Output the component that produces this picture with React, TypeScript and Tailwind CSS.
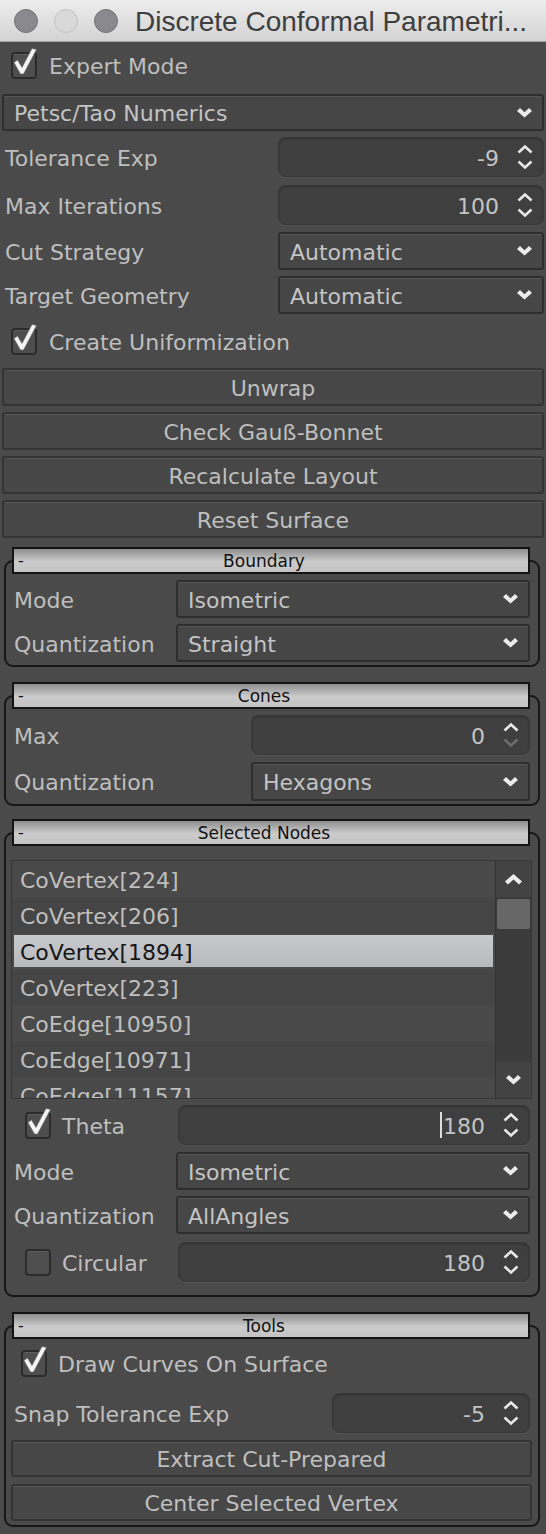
import React from 'react'

const label = 'text-[22px] leading-none pt-[3px] text-[#bfbfbf] whitespace-nowrap'

function Check({ checked }: { checked: boolean }) {
  return (
    <span className="relative inline-block w-[26px] h-[27px] shrink-0">
      <span className="absolute inset-0 rounded-[4px] border-2 border-[#2b2b2b] bg-[#4e4e4e] shadow-[inset_0_1px_0_#5d5d5d]" />
      {checked && (
        <svg className="absolute left-0 top-[-4px]" width="26" height="31" viewBox="0 0 26 31">
          <polygon
            points="3,14.5 6.5,12 11,19.5 21,0.5 25.5,1.5 12.5,26 9.5,26"
            fill="#f4f4f4"
            stroke="#6a6a6a"
            strokeWidth="0.6"
          />
        </svg>
      )}
    </span>
  )
}

function SpinArrows({ downDisabled = false }: { downDisabled?: boolean }) {
  return (
    <svg width="18" height="26" viewBox="0 0 18 26">
      <path d="M2.5 8.5 L9 2.5 L15.5 8.5" fill="none" stroke="#e8e8e8" strokeWidth="2.6" />
      <path
        d="M2.5 17.5 L9 23.5 L15.5 17.5"
        fill="none"
        stroke={downDisabled ? '#6c6c6c' : '#e8e8e8'}
        strokeWidth="2.6"
      />
    </svg>
  )
}

function Chevron() {
  return (
    <svg width="15" height="10" viewBox="0 0 15 10">
      <polygon points="0,3 3,0 7.5,4.2 12,0 15,3 7.5,9.5" fill="#ececec" />
    </svg>
  )
}

function SpinBox({
  value,
  className = '',
  caret = false,
  downDisabled = false,
}: {
  value: string
  className?: string
  caret?: boolean
  downDisabled?: boolean
}) {
  return (
    <div
      className={`flex items-center h-[40px] rounded-[7px] bg-[#3f3f3f] border border-[#383838] shadow-[inset_0_1px_2px_rgba(0,0,0,0.25),0_1px_0_#545454] ${className}`}
    >
      <div className="flex-1 flex justify-end items-center pr-[8px] pt-[3px] text-[22px] leading-none text-[#c4c4c4]">
        {caret && <span className="w-[2px] h-[26px] -mt-[3px] bg-[#dedede] mr-[1px]" />}
        {value}
      </div>
      <div className="w-[36px] flex justify-center">
        <SpinArrows downDisabled={downDisabled} />
      </div>
    </div>
  )
}

function Combo({ value, className = '' }: { value: string; className?: string }) {
  return (
    <div
      className={`flex items-center justify-between rounded-[3px] bg-[#464646] border-2 border-[#2e2e2e] shadow-[inset_0_1px_0_#565656] pl-[10px] pr-[10px] ${className}`}
    >
      <span className="pt-[3px] text-[22px] leading-none text-[#c4c4c4] whitespace-nowrap">{value}</span>
      <Chevron />
    </div>
  )
}

function Button({ title, className = '' }: { title: string; className?: string }) {
  return (
    <div
      className={`flex items-center justify-center rounded-[3px] bg-[#474747] border-2 border-[#343434] shadow-[inset_0_1px_0_#575757] ${className}`}
    >
      <span className="pt-[3px] text-[22px] leading-none text-[#bfbfbf] whitespace-nowrap">{title}</span>
    </div>
  )
}

function Group({
  title,
  className = '',
  frame = '',
  children,
}: {
  title: string
  className?: string
  frame?: string
  children: React.ReactNode
}) {
  return (
    <div className={`ml-[2px] mr-[4px] ${className}`}>
      <div className="relative z-10 ml-[8px] mr-[10px] h-[27px] border-2 border-[#141414] bg-[linear-gradient(to_bottom,#8e8e8e,#cbcbcb_55%,#c3c3c3)] flex items-center">
        <span className="w-[14px] pl-[4px] text-[16px] leading-none text-[#111]">-</span>
        <span className="flex-1 text-center pr-[28px] pt-[1px] text-[17px] leading-none text-[#111]">{title}</span>
      </div>
      <div className={`-mt-[14px] border-2 border-[#161616] rounded-[9px] px-[8px] ${frame}`}>{children}</div>
    </div>
  )
}

function NodeList() {
  const items = [
    'CoVertex[224]',
    'CoVertex[206]',
    'CoVertex[1894]',
    'CoVertex[223]',
    'CoEdge[10950]',
    'CoEdge[10971]',
    'CoEdge[11157]',
  ]
  return (
    <div className="-ml-[3px] -mr-[2px] h-[239px] flex border border-[#363636] bg-[#474747]">
      <div className="flex-1 overflow-hidden">
        {items.map((it, i) => (
          <div
            key={it}
            className={`h-[36px] flex items-center ${i % 2 === 0 ? 'bg-[#494949]' : 'bg-[#454545]'}`}
          >
            {i === 2 ? (
              <div className="mx-[2px] h-[32px] flex-1 flex items-center pl-[6px] pt-[3px] bg-[linear-gradient(to_bottom,#c8c9cc,#b8b9bc)] text-[22px] leading-none text-[#141414]">
                {it}
              </div>
            ) : (
              <span className="pl-[8px] pt-[3px] text-[22px] leading-none text-[#bfbfbf] whitespace-nowrap">{it}</span>
            )}
          </div>
        ))}
      </div>
      <div className="w-[36px] bg-[#3b3b3b] flex flex-col border-l border-[#333]">
        <div className="h-[36px] flex items-center justify-center bg-[#434343]">
          <svg width="17" height="11" viewBox="0 0 17 11">
            <polygon points="0,7.5 8.5,0 17,7.5 14,10.5 8.5,5.5 3,10.5" fill="#ececec" />
          </svg>
        </div>
        <div className="mt-[2px] mx-[1px] h-[30px] bg-[#676767] rounded-[2px]" />
        <div className="flex-1" />
        <div className="h-[36px] flex items-center justify-center bg-[#434343]">
          <Chevron />
        </div>
      </div>
    </div>
  )
}

export default function App() {
  return (
    <div className="w-[546px] min-h-[1534px] bg-[#4a4a4a] font-['DejaVu_Sans',sans-serif] overflow-hidden">
      {/* title bar */}
      <div className="h-[42px] flex items-center pl-[14px] bg-[linear-gradient(to_bottom,#ededed,#d3d3d3)] border-b border-[#a3a3a3]">
        <span className="w-[24px] h-[24px] rounded-full bg-[#8a8a8e] border border-[#737376]" />
        <span className="ml-[16px] w-[24px] h-[24px] rounded-full bg-[#d9d9d9] border border-[#c3c3c3]" />
        <span className="ml-[16px] w-[24px] h-[24px] rounded-full bg-[#8a8a8e] border border-[#737376]" />
        <span className="ml-[17px] pt-[2px] font-['Liberation_Sans',Arial,sans-serif] text-[28px] leading-none text-[#3e3e3e] whitespace-nowrap">
          Discrete Conformal Parametri...
        </span>
      </div>

      <div className="px-[2px]">
        <div className="h-[47px] flex items-center pl-[9px] gap-[12px]">
          <Check checked />
          <span className={label}>Expert Mode</span>
        </div>
        <Combo value="Petsc/Tao Numerics" className="mt-[5px] h-[37px]" />

        <div className="mt-[6px] flex items-center justify-between">
          <span className={`${label} pl-[3px]`}>Tolerance Exp</span>
          <SpinBox value="-9" className="w-[266px]" />
        </div>
        <div className="mt-[8px] flex items-center justify-between">
          <span className={`${label} pl-[3px]`}>Max Iterations</span>
          <SpinBox value="100" className="w-[266px]" />
        </div>
        <div className="mt-[7px] flex items-center justify-between">
          <span className={`${label} pl-[3px]`}>Cut Strategy</span>
          <Combo value="Automatic" className="w-[266px] h-[38px]" />
        </div>
        <div className="mt-[6px] flex items-center justify-between">
          <span className={`${label} pl-[3px]`}>Target Geometry</span>
          <Combo value="Automatic" className="w-[266px] h-[38px]" />
        </div>
        <div className="mt-[3px] h-[48px] flex items-center pl-[9px] gap-[12px]">
          <Check checked />
          <span className={label}>Create Uniformization</span>
        </div>

        <Button title="Unwrap" className="mt-[3px] h-[38px]" />
        <Button title="Check Gauß-Bonnet" className="mt-[6px] h-[38px]" />
        <Button title="Recalculate Layout" className="mt-[6px] h-[38px]" />
        <Button title="Reset Surface" className="mt-[6px] h-[38px]" />

        <Group title="Boundary" className="mt-[9px]" frame="pt-[18px] pb-[3px]">
          <div className="flex items-center justify-between">
            <span className={label}>Mode</span>
            <Combo value="Isometric" className="w-[354px] h-[38px]" />
          </div>
          <div className="mt-[6px] flex items-center justify-between">
            <span className={label}>Quantization</span>
            <Combo value="Straight" className="w-[354px] h-[38px]" />
          </div>
        </Group>

        <Group title="Cones" className="mt-[15px]" frame="pt-[18px] pb-[3px]">
          <div className="flex items-center justify-between">
            <span className={label}>Max</span>
            <SpinBox value="0" downDisabled className="w-[279px]" />
          </div>
          <div className="mt-[7px] flex items-center justify-between">
            <span className={label}>Quantization</span>
            <Combo value="Hexagons" className="w-[279px] h-[39px]" />
          </div>
        </Group>

        <Group title="Selected Nodes" className="mt-[13px]" frame="pt-[26px] pb-[13px]">
          <NodeList />
          <div className="mt-[6px] flex items-center justify-between">
            <div className="flex items-center pl-[11px] gap-[11px]">
              <Check checked />
              <span className={label}>Theta</span>
            </div>
            <SpinBox value="180" caret className="w-[352px]" />
          </div>
          <div className="mt-[7px] flex items-center justify-between">
            <span className={label}>Mode</span>
            <Combo value="Isometric" className="w-[354px] h-[38px]" />
          </div>
          <div className="mt-[6px] flex items-center justify-between">
            <span className={label}>Quantization</span>
            <Combo value="AllAngles" className="w-[354px] h-[38px]" />
          </div>
          <div className="mt-[8px] flex items-center justify-between">
            <div className="flex items-center pl-[11px] gap-[11px]">
              <Check checked={false} />
              <span className={label}>Circular</span>
            </div>
            <SpinBox value="180" className="w-[352px]" />
          </div>
        </Group>

        <Group title="Tools" className="mt-[15px]" frame="pt-[14px] pb-[4px]">
          <div className="h-[44px] flex items-center pl-[7px] gap-[11px]">
            <Check checked />
            <span className={label}>Draw Curves On Surface</span>
          </div>
          <div className="mt-[8px] flex items-center justify-between">
            <span className={label}>Snap Tolerance Exp</span>
            <SpinBox value="-5" className="w-[198px]" />
          </div>
          <Button title="Extract Cut-Prepared" className="mt-[7px] h-[37px] -ml-[3px] -mr-[2px]" />
          <Button title="Center Selected Vertex" className="mt-[7px] h-[37px] -ml-[3px] -mr-[2px]" />
        </Group>
      </div>
    </div>
  )
}
